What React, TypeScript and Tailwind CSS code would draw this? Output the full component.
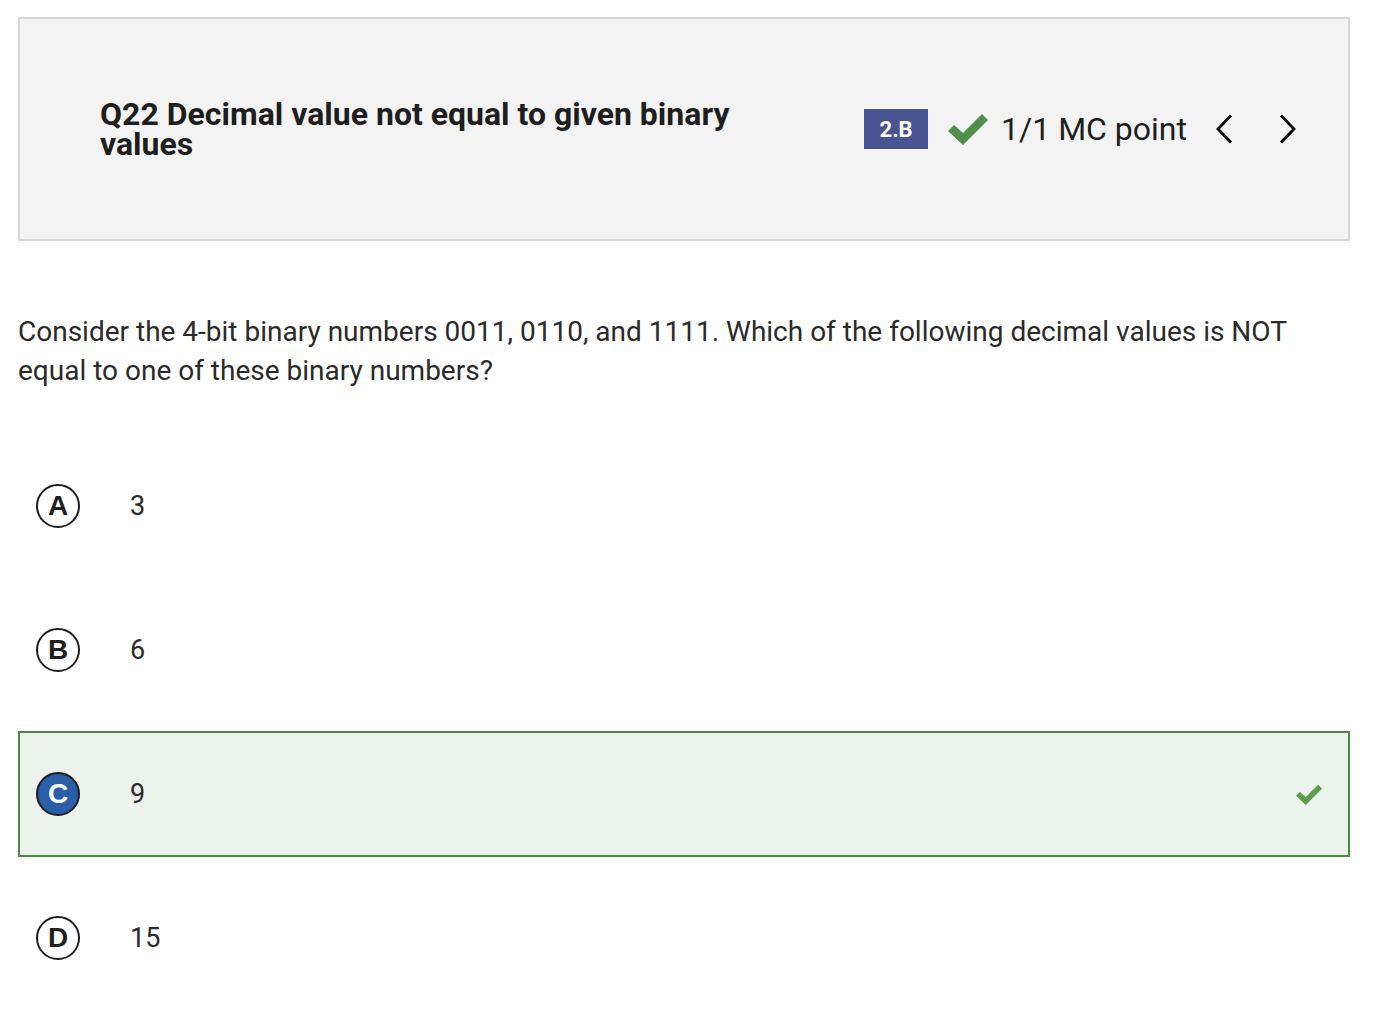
const options = [
  { letter: "A", value: "3" },
  { letter: "B", value: "6" },
  { letter: "C", value: "9", correct: true },
  { letter: "D", value: "15" },
];

function Check({ className }: { className?: string }) {
  return (
    <svg viewBox="0 0 40 32" className={className} fill="currentColor">
      <path d="M0 18 L6 12 L15 20 L34 1 L40 7 L15 32 Z" />
    </svg>
  );
}

function Chevron({ dir }: { dir: "left" | "right" }) {
  return (
    <svg viewBox="0 0 18 30" className="w-[18px] h-[30px]" fill="none" stroke="black" strokeWidth={2.8}>
      <path d={dir === "left" ? "M16 1.5 L3 15 L16 28.5" : "M2 1.5 L15 15 L2 28.5"} />
    </svg>
  );
}

export default function App() {
  return (
    <div className="min-h-screen bg-white px-[18px] pt-[17px] text-[#222] font-['Roboto',sans-serif]">
      <div className="h-[224px] w-[1332px] border-2 border-[#d6d6d6] bg-[#f3f3f3] flex items-center justify-between pl-[80px] pr-[51px]">
        <h1 className="w-[690px] text-[32px] font-bold leading-[30px] text-[#1e1e1e]">
          Q22 Decimal value not equal to given binary values
        </h1>
        <div className="flex items-center">
          <span className="bg-[#485391] text-white text-[22px] font-bold h-[40px] w-[64px] flex items-center justify-center">
            2.B
          </span>
          <Check className="ml-[20px] w-[40px] h-[32px] text-[#4f8f4a]" />
          <span className="ml-[13px] text-[32px] text-[#1e1e1e]">1/1 MC point</span>
          <span className="ml-[28px] flex">
            <Chevron dir="left" />
          </span>
          <span className="ml-[46px] flex">
            <Chevron dir="right" />
          </span>
        </div>
      </div>

      <p className="mt-[71px] w-[1332px] text-[28px] leading-[39px] text-[#2a2a2a]">
        Consider the 4-bit binary numbers 0011, 0110, and 1111. Which of the following decimal values is NOT equal to one of these binary numbers?
      </p>

      <div className="mt-[53px] flex flex-col gap-[18px] w-[1332px]">
        {options.map((o) => (
          <div
            key={o.letter}
            className={
              "h-[126px] flex items-center pl-[16px] pr-[26px] border-2 " +
              (o.correct ? "border-[#4a8a3f] bg-[#ecf3ec]" : "border-transparent")
            }
          >
            <span
              className={
                "w-[44px] h-[44px] rounded-full border-2 border-[#1e1e1e] flex items-center justify-center text-[28px] font-bold font-['Liberation_Sans',sans-serif] " +
                (o.correct ? "bg-[#2a5ea8] text-white" : "text-[#1e1e1e]")
              }
            >
              {o.letter}
            </span>
            <span className="ml-[50px] text-[27px] text-[#2a2a2a]">{o.value}</span>
            {o.correct && <Check className="ml-auto w-[26px] h-[21px] text-[#5a9e4e]" />}
          </div>
        ))}
      </div>
    </div>
  );
}
